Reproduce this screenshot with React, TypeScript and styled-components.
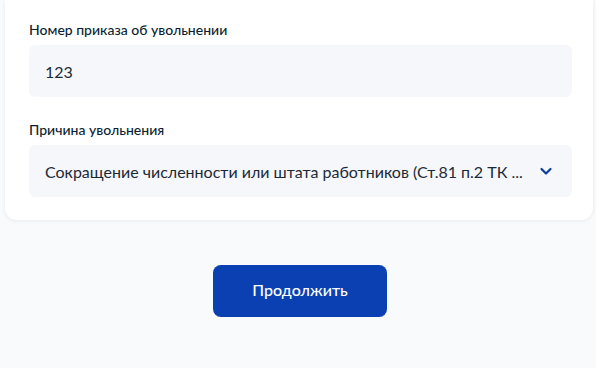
import React from 'react';
import styled, { createGlobalStyle } from 'styled-components';

const GlobalStyle = createGlobalStyle`
  html, body {
    margin: 0;
    padding: 0;
    background: #f9fafc;
    font-family: Lato, "Noto Sans", sans-serif;
    color: #0b1f33;
  }
`;

const Page = styled.div`
  width: 596px;
  height: 368px;
  box-sizing: border-box;
  padding-left: 4px;
  overflow: hidden;
  display: flex;
  flex-direction: column;
  align-items: center;
`;

const Card = styled.div`
  align-self: flex-start;
  margin-left: 1px;
  width: 588px;
  box-sizing: border-box;
  padding: 20px 21px 23px 24px;
  background: #fff;
  border-radius: 0 0 12px 12px;
  box-shadow: 0 1px 4px rgba(11, 31, 51, 0.07);
  display: flex;
  flex-direction: column;
  gap: 23px;
`;

const Field = styled.div`
  display: flex;
  flex-direction: column;
  gap: 5px;
`;

const Label = styled.div`
  font-size: 14px;
  line-height: 20px;
  font-weight: 500;
  color: #0b1f33;
`;

const Control = styled.div`
  height: 52px;
  box-sizing: border-box;
  padding: 0 16px;
  background: #f5f7fa;
  border-radius: 6px;
  display: flex;
  align-items: center;
  justify-content: space-between;
  font-size: 16px;
  color: #1c2a38;
`;

const Value = styled.span`
  white-space: nowrap;
`;

const Chevron = styled.svg`
  width: 16px;
  height: 16px;
  margin-right: 2px;
  flex-shrink: 0;
`;

const Button = styled.button`
  margin-top: 45px;
  width: 174px;
  height: 52px;
  padding: 0 0 3px;
  border: none;
  border-radius: 8px;
  background: #0b40b2;
  color: #fff;
  font-family: Lato, "Noto Sans", sans-serif;
  font-size: 16px;
  font-weight: 500;
  cursor: pointer;
`;

const App = () => {
  return (
    <Page>
      <GlobalStyle />
      <Card>
        <Field>
          <Label>Номер приказа об увольнении</Label>
          <Control>
            <Value>123</Value>
          </Control>
        </Field>
        <Field>
          <Label>Причина увольнения</Label>
          <Control>
            <Value>Сокращение численности или штата работников (Ст.81 п.2 ТК ...</Value>
            <Chevron viewBox="0 0 16 16" fill="none">
              <path d="M3.5 6l4.5 4.5L12.5 6" stroke="#0b3f9e" strokeWidth="2.2" strokeLinecap="round" strokeLinejoin="round" />
            </Chevron>
          </Control>
        </Field>
      </Card>
      <Button>Продолжить</Button>
    </Page>
  );
};

export default App;
